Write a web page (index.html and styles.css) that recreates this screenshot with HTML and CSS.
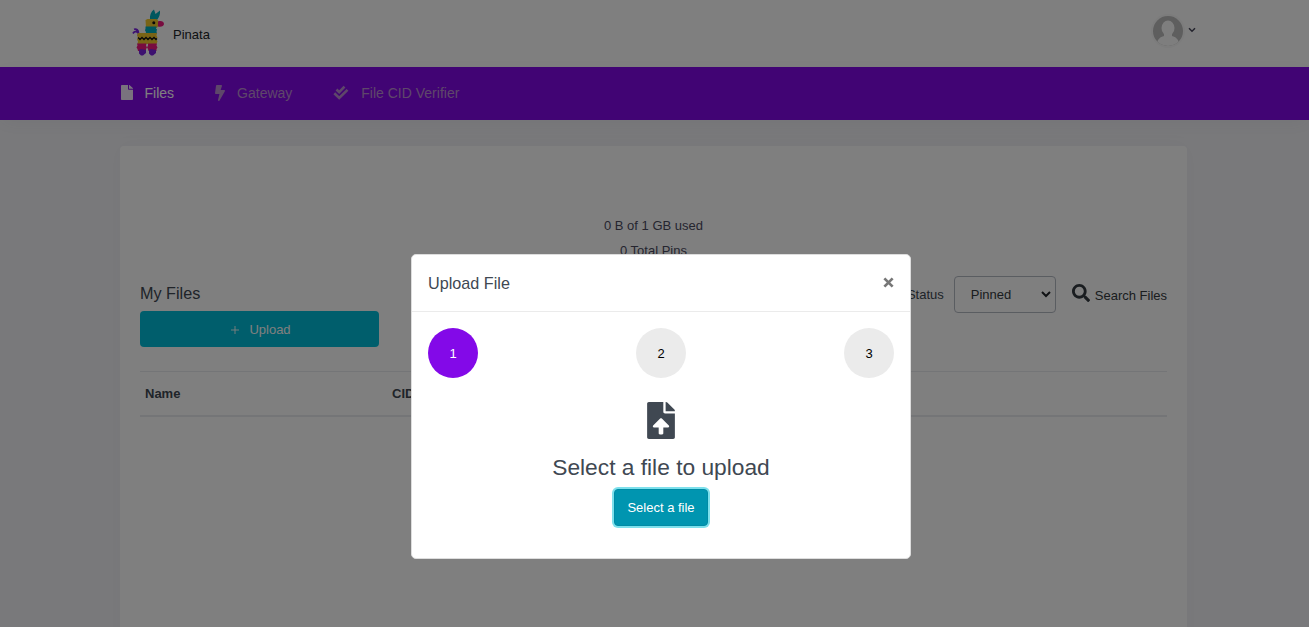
FILE: index.html
```html
<!DOCTYPE html>
<html lang="en">
<head>
<meta charset="utf-8">
<title>Pinata</title>
<link rel="stylesheet" href="styles.css">
</head>
<body>
<header class="topbar">
  <div class="brand">
    <svg class="logo" viewBox="0 0 32 48" width="32" height="48">
      <path fill="none" stroke="#7a22e0" stroke-width="1.700" d="M6.500 28c.5-3-1-5-3-4.500M6.500 25c0-3-2-4.500-4.500-3.700M1 25.500c1-2 3-2.500 5-1"/>
      <path fill="#00aebd" d="M18 12c-.5-5 1-8.500 4-10.500l1.500 4.500L28 2.500c.5 4-1 7-3 9.500z"/>
      <path fill="#f2c92c" d="M13.500 12l2-1h9l2 2v5l-2 2H14z"/>
      <path fill="#f0187f" d="M26 13.500c3-1 6 0 6 2.500 0 2-3 3.500-6 2.500z"/>
      <circle cx="21.800" cy="14.800" r="1.500" fill="#111"/>
      <path fill="#00aebd" d="M13.500 18.500h11l-.5 2 1 1-.5 2 .5 2.500H13.500l.5-2-1-1.500.5-2z"/>
      <path fill="#f2c92c" d="M6 25h19l-.5 2.500 1 2-1 2 1 2-1 2.500H5.500l.5-2.500-1-2 1-2-1-2z"/>
      <path fill="none" stroke="#111" stroke-width="1.300" d="M6 29.500l2 2 2-2 2 2 2-2 2 2 2-2 2 2 2-2 2 2 1-1"/>
      <path fill="#f0187f" d="M5 35.500h9.500l-.5 2 1 2-1 1.500v2H6l-.5-2-1-1.500 1-2zM16 35.500h9l-.5 2 1 2-1 1.500v2h-8l-.5-2-1-1.500 1-2z"/>
      <path fill="#7a22e0" d="M7 42l2-1 3 .5 2 .5v3l-3 2.500H9l-2-2zM17 42l2-1 3 .5 2 .5v3l-3 2.500h-2l-2-2z"/>
    </svg>
    <span>Pinata</span>
  </div>
  <div class="account">
    <svg width="34" height="34" viewBox="0 0 34 34"><defs><clipPath id="face"><circle cx="17" cy="17" r="15"/></clipPath></defs><circle cx="17" cy="17" r="17" fill="#f8f8f8"/><circle cx="17" cy="17" r="15" fill="#bcbcbc"/><g fill="#fcfcfc" clip-path="url(#face)"><ellipse cx="17" cy="14" rx="6.500" ry="7.500"/><path d="M13 19h8v3c4 1 6 3 7 7v4H6v-4c1-4 3-6 7-7z"/></g></svg>
    <svg class="caret" width="8" height="6" viewBox="0 0 8 6"><path d="M1 1.200l3 3 3-3" fill="none" stroke="#47475a" stroke-width="1.500"/></svg>
  </div>
</header>
<nav class="nav">
  <a class="item active"><svg width="12" height="15" viewBox="0 0 384 512" preserveAspectRatio="none"><path d="M224 136V0H24C10.700 0 0 10.700 0 24v464c0 13.300 10.700 24 24 24h336c13.300 0 24-10.700 24-24V160H248c-13.200 0-24-10.800-24-24zm160-14.100v6.100H256V0h6.100c6.400 0 12.500 2.500 17 7l97.900 98c4.500 4.500 7 10.600 7 16.900z"/></svg><span>Files</span></a>
  <a class="item bolt"><svg width="10" height="16" viewBox="0 0 320 512"><path d="M296 160H180.600l42.600-129.800C227.200 15 215.700 0 200 0H56C44 0 33.800 8.900 32.200 20.800l-32 240C-1.700 275.200 9.500 288 24 288h118.700L96.600 482.500c-3.600 15.200 8 29.500 23.300 29.500 8.400 0 16.400-4.400 20.800-12l176-304c9.300-15.900-2.200-36-20.700-36z"/></svg><span>Gateway</span></a>
  <a class="item check"><svg width="16" height="16" viewBox="0 0 16 16"><path d="M3.500 4.500l2.700 2.700L11.500 1.700M1.300 8.300L6.200 13 14.500 4.900" fill="none" stroke="currentColor" stroke-width="2.600"/></svg><span>File CID Verifier</span></a>
</nav>
<main class="card">
  <div class="usage"><p>0 B of 1 GB used</p><p>0 Total Pins</p></div>
  <div class="tools">
    <div class="left"><h2>My Files</h2><button class="upload"><svg width="8" height="8" viewBox="0 0 8 8"><path d="M4 0v8M0 4h8" stroke="#fff" stroke-width=".9"/></svg>Upload</button></div>
    <div class="right">
      <span class="status">Status</span>
      <div class="select"><span>Pinned</span><svg width="10" height="7" viewBox="0 0 10 7"><path d="M1 1l4 4 4-4" fill="none" stroke="#212529" stroke-width="2"/></svg></div>
      <svg class="lens" width="18" height="18" viewBox="0 0 512 512"><path fill="#343a40" d="M505 442.700L405.300 343c-4.500-4.500-10.600-7-17-7H372c27.600-35.300 44-79.700 44-128C416 93.100 322.900 0 208 0S0 93.100 0 208s93.100 208 208 208c48.300 0 92.700-16.400 128-44v16.300c0 6.400 2.500 12.500 7 17l99.700 99.700c9.400 9.400 24.600 9.400 33.900 0l28.300-28.300c9.400-9.400 9.400-24.600.1-34zM208 336c-70.700 0-128-57.200-128-128 0-70.700 57.200-128 128-128 70.700 0 128 57.200 128 128 0 70.700-57.200 128-128 128z"/></svg>
      <span class="search">Search Files</span>
    </div>
  </div>
  <div class="thead"><span>Name</span><span>CID</span></div>
</main>
<div class="backdrop">
  <section class="modal">
    <div class="modal-head"><h3>Upload File</h3><svg width="11" height="11" viewBox="0 0 12 12"><path d="M1.500 1.500l9 9M10.500 1.500l-9 9" stroke="#777" stroke-width="3"/></svg></div>
    <div class="steps"><span class="step on">1</span><span class="step">2</span><span class="step">3</span></div>
    <div class="pick">
      <svg width="28" height="37" viewBox="0 0 384 512"><path fill="#404852" d="M224 136V0H24C10.700 0 0 10.700 0 24v464c0 13.300 10.700 24 24 24h336c13.300 0 24-10.700 24-24V160H248c-13.200 0-24-10.800-24-24zm65.200 216H224v80c0 8.800-7.200 16-16 16h-32c-8.800 0-16-7.200-16-16v-80H94.800c-14.300 0-21.400-17.300-11.300-27.400l96.400-95.700c6.700-6.600 17.400-6.600 24 0l96.400 95.700c10.200 10.100 3.100 27.400-11.100 27.400zM377 105L279.100 7c-4.500-4.500-10.600-7-17-7H256v128h128v-6.100c0-6.300-2.500-12.400-7-16.900z"/></svg>
      <h1>Select a file to upload</h1>
      <button class="choose">Select a file</button>
    </div>
  </section>
</div>
</body>
</html>
```
FILE: styles.css
```css
* { box-sizing: border-box; }
body { margin: 0; height: 627px; overflow: hidden; background: #f3f3f7; font: 13px/20px "Liberation Sans", Arial, sans-serif; color: #404852; }
h1, h2, h3, p { margin: 0; font-weight: 400; }
button { font: inherit; color: #fff; border: 0; border-radius: 4px; }
.topbar { height: 67px; background: #fff; display: flex; justify-content: space-between; padding: 0 113px 0 132px; }
.brand { display: flex; align-items: flex-start; gap: 9px; padding-top: 8px; color: #212529; }
.brand span { margin-top: 17px; }
.account { display: flex; align-items: flex-start; gap: 3px; padding-top: 14px; }
.caret { margin-top: 13px; }
.nav { height: 53px; background: #8309e8; display: flex; align-items: center; padding: 0 120.5px 2px; font-size: 14px; box-shadow: 0 4px 20px rgba(60, 60, 90, .05); }
.item { display: flex; align-items: center; gap: 12px; color: #bd8fd4; }
.item svg { fill: currentColor; }
.item.active { color: #fff; }
.item.active svg { opacity: .9; }
.bolt, .check { margin-left: 41px; }
.card { margin: 26px 122px 0 120px; height: 500px; background: #fff; padding: 67px 20px 0; border-radius: 4px; box-shadow: 0 0 20px rgba(60, 60, 90, .03); }
.usage { text-align: center; line-height: 25px; color: #4b4b5f; }
.tools { display: flex; justify-content: space-between; margin-top: 20px; height: 88px; }
.left { width: 239px; }
.left h2 { font-size: 16.2px; line-height: 20px; }
.upload { width: 239px; height: 36px; margin-top: 8px; padding: 2px 4px 0 7px; background: #00bcd8; display: flex; align-items: center; justify-content: center; gap: 10px; }
.right { display: flex; align-items: center; height: 37px; margin-top: -7px; }
.select { width: 102px; height: 37px; margin: 0 16px 0 10px; padding: 0 4px 0 16px; border: 1px solid #b5bac3; border-radius: 4px; display: flex; align-items: center; justify-content: space-between; color: #343a40; }
.lens { margin: -3px 5px 0 0; }
.search { margin-top: 2px; color: #343a40; }
.thead { display: grid; grid-template-columns: 247px 1fr; height: 46px; padding: 12px 5px; border-top: 1px solid #e9eaee; border-bottom: 2px solid #e9eaee; font-weight: 700; }
.backdrop { position: fixed; inset: 0; background: rgba(0, 0, 0, .5); padding-top: 254px; }
.modal { width: 500px; height: 305px; margin-left: 411px; background: #fff; border: 1px solid #ddd; border-radius: 5px; }
.modal-head { height: 57px; display: flex; align-items: center; justify-content: space-between; padding: 0 16px; border-bottom: 1px solid #ebebeb; }
.modal-head h3 { font-size: 16.2px; }
.modal-head svg { margin-top: -2px; }
.steps { display: flex; justify-content: space-between; padding: 16px 16px 0; }
.step { width: 50px; height: 50px; padding-top: 2px; border-radius: 50%; background: #ebebeb; color: #000; display: grid; place-items: center; }
.step.on { background: #8309e8; color: #fff; }
.pick { display: flex; flex-direction: column; align-items: center; padding-top: 24px; }
.pick h1 { font-size: 22.75px; line-height: 28px; margin-top: 14px; }
.choose { width: 94px; height: 37px; margin-top: 8px; padding: 0; background: #0095b0; border: 1px solid #008ba5; box-shadow: 0 0 0 2px #7de0ec; }
```
